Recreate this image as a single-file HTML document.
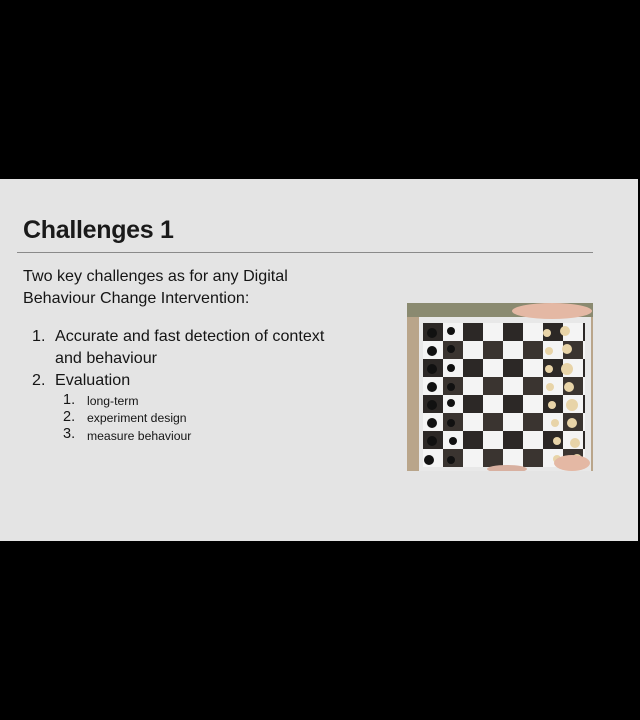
<!DOCTYPE html>
<html><head><meta charset="utf-8"><style>
body{margin:0;width:640px;height:720px;background:#000;position:relative;overflow:hidden;font-family:"Liberation Sans",sans-serif;color:#151515}
#slide{position:absolute;left:0;top:179px;width:638px;height:362px;background:#e4e4e4}
.t{position:absolute;white-space:nowrap}
h1{position:absolute;margin:0;left:23px;top:216px;font:bold 25px "Liberation Sans",sans-serif;letter-spacing:-0.3px;color:#1a1a1a}
#line{position:absolute;left:17px;top:252px;width:576px;height:1px;background:#8a8a8a}
.m{font-size:16.1px}
.s{font-size:12.2px}
.n{font-size:14.5px}
</style></head><body>
<div id="slide"></div>
<h1>Challenges 1</h1>
<div id="line"></div>
<div class="t m" style="left:23px;top:267px">Two key challenges as for any Digital</div>
<div class="t m" style="left:23px;top:289px">Behaviour Change Intervention:</div>
<div class="t m" style="left:32px;top:327px">1.</div>
<div class="t m" style="left:55px;top:327px">Accurate and fast detection of context</div>
<div class="t m" style="left:55px;top:349px">and behaviour</div>
<div class="t m" style="left:32px;top:371px">2.</div>
<div class="t m" style="left:55px;top:371px">Evaluation</div>
<div class="t n" style="left:63px;top:392px">1.</div><div class="t s" style="left:87px;top:394px">long-term</div>
<div class="t n" style="left:63px;top:409px">2.</div><div class="t s" style="left:87px;top:411px">experiment design</div>
<div class="t n" style="left:63px;top:426px">3.</div><div class="t s" style="left:87px;top:429px">measure behaviour</div>
<svg style="position:absolute;left:407px;top:303px" width="186" height="168" viewBox="0 0 186 168">
<defs><pattern id="c" x="16" y="20" width="40" height="36" patternUnits="userSpaceOnUse">
<rect width="40" height="36" fill="#f4f4f4"/><rect width="20" height="18" fill="#2c2826"/><rect x="20" y="18" width="20" height="18" fill="#3a3430"/></pattern></defs>
<rect width="186" height="168" fill="#b9a58a"/>
<rect x="0" y="0" width="186" height="14" fill="#8a8a70"/>
<rect x="12" y="14" width="172" height="154" fill="#e8e8e8"/>
<rect x="16" y="20" width="162" height="144" fill="url(#c)"/>
<g fill="#111">
<circle cx="25" cy="30" r="5"/><circle cx="25" cy="48" r="5"/><circle cx="25" cy="66" r="5"/><circle cx="25" cy="84" r="5"/><circle cx="25" cy="102" r="5"/><circle cx="25" cy="120" r="5"/><circle cx="25" cy="138" r="5"/><circle cx="22" cy="157" r="5"/>
<circle cx="44" cy="28" r="4"/><circle cx="44" cy="46" r="4"/><circle cx="44" cy="65" r="4"/><circle cx="44" cy="84" r="4"/><circle cx="44" cy="100" r="4"/><circle cx="44" cy="120" r="4"/><circle cx="46" cy="138" r="4"/><circle cx="44" cy="157" r="4"/></g>
<g fill="#e8d4a8">
<circle cx="140" cy="30" r="4"/><circle cx="142" cy="48" r="4"/><circle cx="142" cy="66" r="4"/><circle cx="143" cy="84" r="4"/><circle cx="145" cy="102" r="4"/><circle cx="148" cy="120" r="4"/><circle cx="150" cy="138" r="4"/><circle cx="150" cy="156" r="4"/>
<circle cx="158" cy="28" r="5"/><circle cx="160" cy="46" r="5"/><circle cx="160" cy="66" r="6"/><circle cx="162" cy="84" r="5"/><circle cx="165" cy="102" r="6"/><circle cx="165" cy="120" r="5"/><circle cx="168" cy="140" r="5"/><circle cx="170" cy="156" r="5"/></g>
<ellipse cx="145" cy="8" rx="40" ry="8" fill="#e4b8a4"/>
<ellipse cx="165" cy="160" rx="18" ry="8" fill="#e4b8a4"/>
<ellipse cx="100" cy="166" rx="20" ry="4" fill="#d8b0a0"/>
</svg>
</body></html>
